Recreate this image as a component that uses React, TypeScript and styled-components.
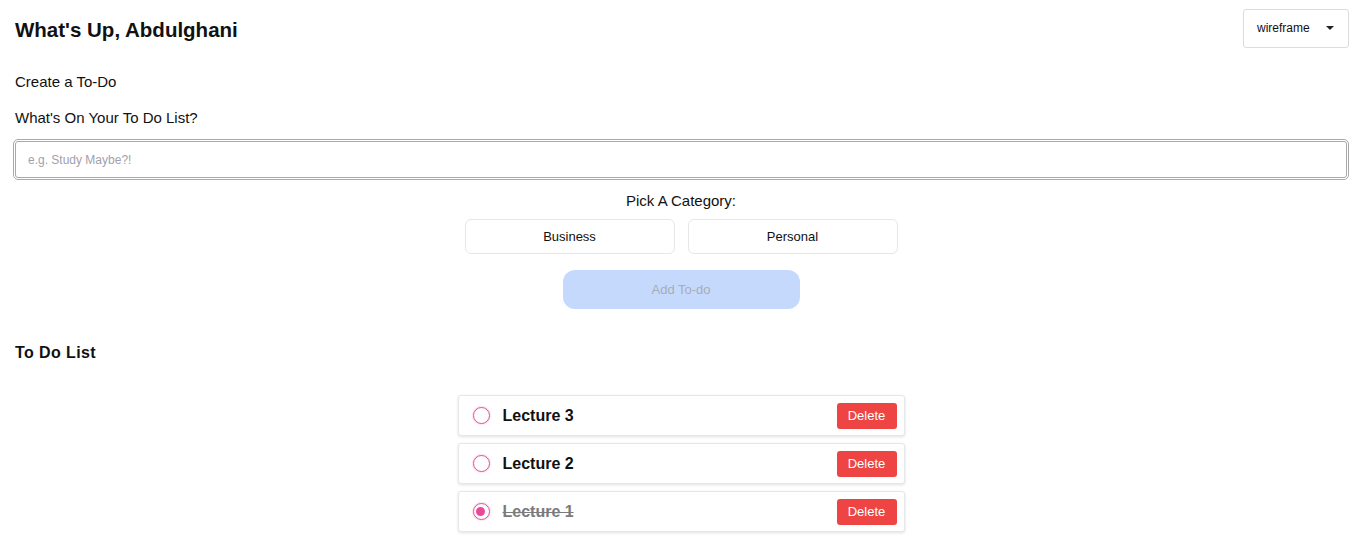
import React, { useState } from 'react';
import styled, { createGlobalStyle, css } from 'styled-components';

const GlobalStyle = createGlobalStyle`
  * {
    box-sizing: border-box;
  }

  body {
    margin: 0;
    background: #fff;
    color: #111;
    font-family: "Comic Sans MS", "Liberation Sans", Arial, sans-serif;
  }
`

type Todo = {
  id: number,
  title: string,
  done: boolean
}

const Page = styled.div`
  padding: 9px 15px 20px 13px;
  display: flex;
  flex-direction: column;
`

const Header = styled.header`
  display: flex;
  justify-content: space-between;
  align-items: center;
  height: 38px;
`

const Title = styled.h1`
  margin: 0 0 0 2px;
  padding-top: 3px;
  font-size: 20.5px;
  font-weight: 700;
`

const ThemeSelect = styled.button`
  all: unset;
  box-sizing: border-box;
  display: flex;
  align-items: center;
  justify-content: space-between;
  width: 106px;
  height: 39px;
  padding: 0 13px 0 13px;
  border: 1px solid #dcdcdc;
  border-radius: 3px;
  font-size: 12px;
  color: #111;
  cursor: pointer;
`

const Caret = styled.span`
  width: 0;
  height: 0;
  border-left: 4px solid transparent;
  border-right: 4px solid transparent;
  border-top: 4px solid #222;
  margin-right: 1px;
`

const Label = styled.p<{ $center?: boolean }>`
  margin: 0 0 0 2px;
  line-height: 20px;
  font-size: 15px;
  ${({ $center }) => $center && css`
    text-align: center;
    margin: 0;
  `}
`

const Section = styled.section<{ $gap: number }>`
  margin-top: ${({ $gap }) => $gap}px;
`

const TodoInput = styled.input`
  display: block;
  width: 100%;
  height: 41px;
  border: 3px double #a9a9a9;
  border-radius: 5px;
  padding: 0 12px;
  font-family: inherit;
  font-size: 12px;
  outline: none;

  &::placeholder {
    color: #a09fae;
  }
`

const CategoryRow = styled.div`
  display: flex;
  justify-content: center;
  gap: 13px;
  margin-top: 8px;
`

const CategoryButton = styled.button<{ $active?: boolean }>`
  width: 210px;
  height: 35px;
  background: ${({ $active }) => ($active ? '#eef4ff' : '#fff')};
  border: 1px solid #e5e7eb;
  border-radius: 6px;
  font-family: inherit;
  font-size: 13px;
  color: #111;
  cursor: pointer;
`

const AddButton = styled.button`
  display: block;
  margin: 16px auto 0;
  width: 237px;
  height: 39px;
  border: none;
  border-radius: 12px;
  background: #c5d9fc;
  color: #a6adb8;
  font-family: inherit;
  font-size: 13px;
`

const ListTitle = styled.h2`
  margin: 0 0 0 2px;
  line-height: 20px;
  font-size: 16px;
  font-weight: 700;
  letter-spacing: 0.4px;
`

const List = styled.ul`
  list-style: none;
  margin: 32px auto 0;
  padding: 0;
  width: 447px;
  display: flex;
  flex-direction: column;
  gap: 7px;
`

const Item = styled.li`
  display: flex;
  align-items: center;
  height: 41px;
  padding: 0 7px 0 14px;
  border: 1px solid #e5e7eb;
  border-radius: 3px;
  box-shadow: 0 1px 3px rgba(0, 0, 0, 0.12);
  background: #fff;
`

const Radio = styled.span<{ $checked: boolean }>`
  position: relative;
  flex: none;
  width: 17px;
  height: 17px;
  border: 1.5px solid #f0469e;
  border-radius: 50%;
  box-shadow: 0 0 2px rgba(236, 72, 153, 0.55);

  ${({ $checked }) => $checked && css`
    &::after {
      content: '';
      position: absolute;
      top: 2.5px;
      left: 2.5px;
      width: 9px;
      height: 9px;
      border-radius: 50%;
      background: #ec4899;
    }
  `}
`

const ItemText = styled.span<{ $done: boolean }>`
  flex: 1;
  margin-left: 13px;
  font-size: 16px;
  font-weight: 700;
  color: ${({ $done }) => ($done ? '#7b7b7b' : '#111')};
  text-decoration: ${({ $done }) => ($done ? 'line-through' : 'none')};
`

const DeleteButton = styled.button`
  width: 60px;
  height: 26px;
  border: none;
  border-radius: 3px;
  background: #ef4444;
  color: #fff;
  font-family: inherit;
  font-size: 13px;
  cursor: pointer;
`

const initialTodos: Todo[] = [
  { id: 3, title: 'Lecture 3', done: false },
  { id: 2, title: 'Lecture 2', done: false },
  { id: 1, title: 'Lecture 1', done: true }
]

const App: React.FC = () => {
  const [todos, setTodos] = useState<Todo[]>(initialTodos)
  const [category, setCategory] = useState<string | null>(null)

  const toggle = (id: number) =>
    setTodos(todos.map(t => (t.id === id ? { ...t, done: !t.done } : t)))

  const remove = (id: number) => setTodos(todos.filter(t => t.id !== id))

  return <>
    <GlobalStyle />
    <Page>
      <Header>
        <Title>What's Up, Abdulghani</Title>
        <ThemeSelect type="button">
          wireframe
          <Caret />
        </ThemeSelect>
      </Header>

      <Section $gap={25}>
        <Label>Create a To-Do</Label>
      </Section>
      <Section $gap={16}>
        <Label>What's On Your To Do List?</Label>
      </Section>
      <Section $gap={11}>
        <TodoInput placeholder="e.g. Study Maybe?!" autoFocus />
      </Section>

      <Section $gap={11}>
        <Label $center>Pick A Category:</Label>
        <CategoryRow>
          {['Business', 'Personal'].map(c => (
            <CategoryButton
              key={c}
              type="button"
              $active={category === c}
              onClick={() => setCategory(c)}
            >
              {c}
            </CategoryButton>
          ))}
        </CategoryRow>
        <AddButton type="button" disabled>Add To-do</AddButton>
      </Section>

      <Section $gap={34}>
        <ListTitle>To Do List</ListTitle>
        <List>
          {todos.map(t => (
            <Item key={t.id}>
              <Radio $checked={t.done} onClick={() => toggle(t.id)} />
              <ItemText $done={t.done}>{t.title}</ItemText>
              <DeleteButton type="button" onClick={() => remove(t.id)}>Delete</DeleteButton>
            </Item>
          ))}
        </List>
      </Section>
    </Page>
  </>
}

export default App
